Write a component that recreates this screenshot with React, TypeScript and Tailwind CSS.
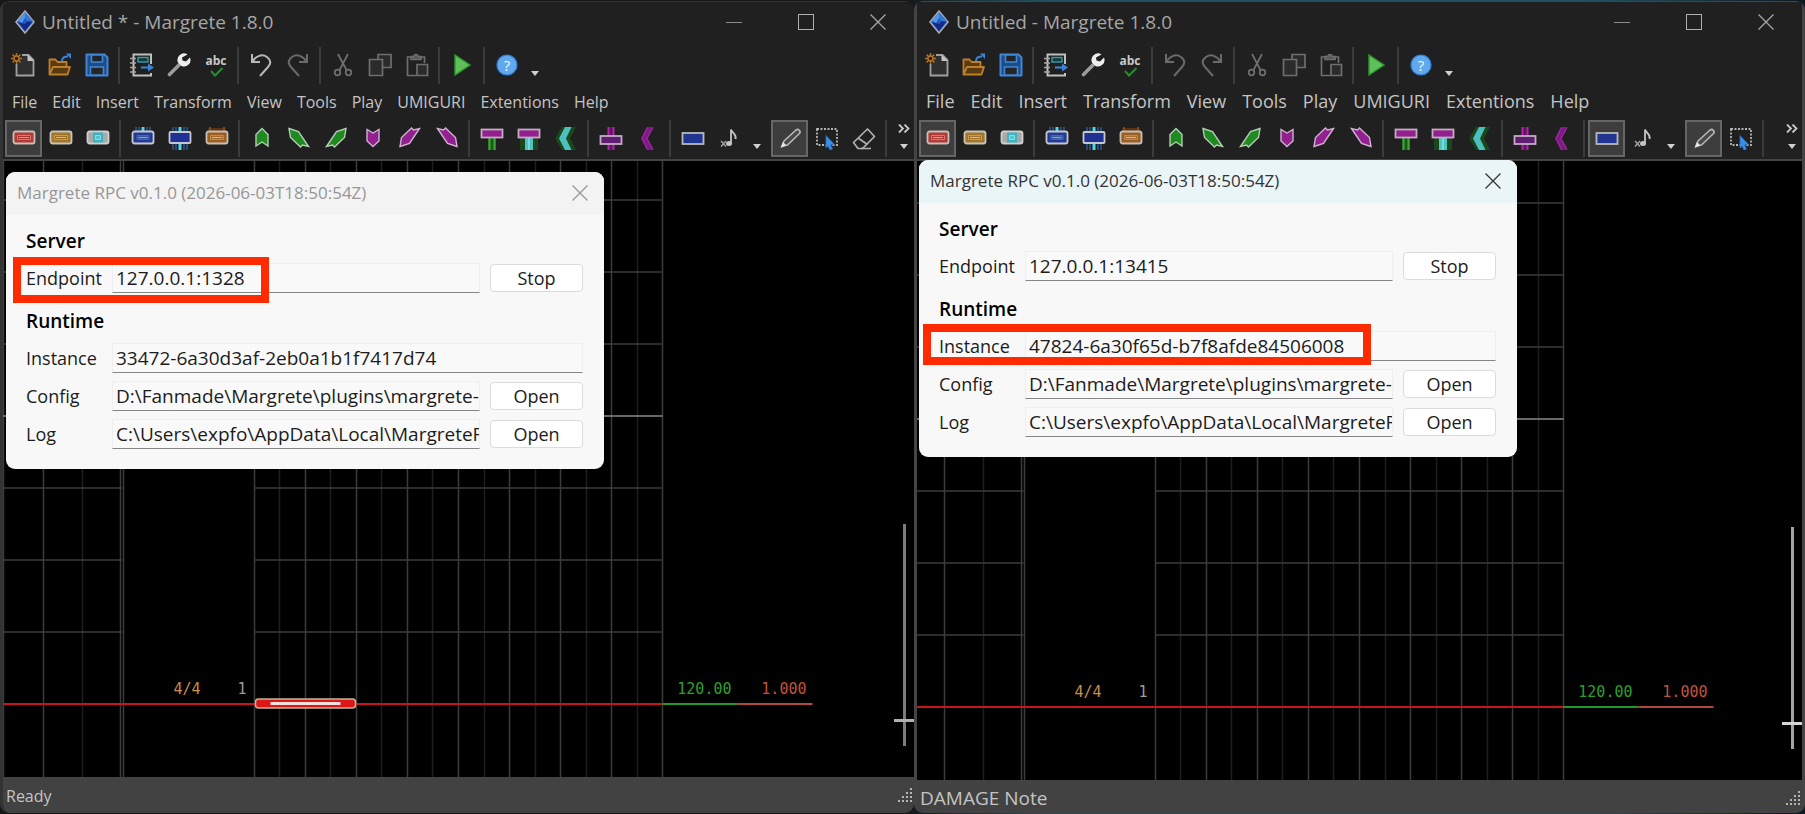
import { ReactNode } from "react";

type IconName =
  | "new" | "open" | "save" | "export" | "wrench" | "spell" | "undo" | "redo"
  | "cut" | "copy" | "paste" | "play" | "help"
  | "tap" | "extap" | "flick" | "hold" | "slide" | "air-hold"
  | "up" | "up-left" | "up-right" | "down" | "down-left" | "down-right"
  | "air-slide" | "air-crush" | "chevron-cyan" | "cross" | "chevron-purple"
  | "damage" | "note" | "pencil" | "select" | "eraser";

const diagonal = "M2 1.5L11.5 4.5 21.5 19.5 15.5 18 13.5 20 3.5 10.5Z";

const icons: Record<IconName, ReactNode> = {
  new: (
    <>
      <path d="M11 2h6.5L22.5 7v15.5h-17V11" fill="#2f2f2f" stroke="#a0a0a0" strokeWidth="1.8" />
      <path d="M16.5 1.5V8h6.5z" fill="#c4c4c4" />
      <circle cx="5.5" cy="5.5" r="2.6" fill="none" stroke="#b8741f" strokeWidth="1.6" />
      <path d="M5.5 0v2M5.5 9v2M0 5.5h2M9 5.5h2M1.6 1.6l1.3 1.3M8.1 8.1l1.3 1.3M1.6 9.4l1.3-1.3M8.1 2.9l1.3-1.3" stroke="#b8741f" strokeWidth="1.4" />
    </>
  ),
  open: (
    <>
      <path d="M1.5 21.5V6.5h6l2 2.5h9v4M1.5 21.5L5 14h17l-2.5 7.5z" fill="#5a3a10" stroke="#bd7f2c" strokeWidth="1.8" strokeLinejoin="round" />
      <path d="M14 8c0-3 2-4.5 6-4.5" fill="none" stroke="#3b83d6" strokeWidth="1.8" />
      <path d="M18 .5h5v5.5z" fill="#3b83d6" />
    </>
  ),
  save: (
    <>
      <path d="M1.5 1.5h18l3 3v18h-21z" fill="#1d4c86" stroke="#3f86d6" strokeWidth="2" strokeLinejoin="round" />
      <path d="M6.5 2h11v7h-11z" fill="#20252c" stroke="#3f86d6" strokeWidth="1.6" />
      <path d="M5.5 14h13v8h-13z" fill="#262626" stroke="#3f86d6" strokeWidth="1.6" />
    </>
  ),
  export: (
    <>
      <path d="M21 11V1.5H3.5v21H21V20" fill="none" stroke="#c0c0c0" strokeWidth="2" />
      <path d="M0 5.5h6M0 10h6M0 14.5h6M0 19h6" stroke="#a8a8a8" strokeWidth="1.4" />
      <rect x="8" y="4.5" width="10" height="4.5" fill="#15393d" stroke="#3d9ca3" strokeWidth="1.4" />
      <path d="M11 14.5h8" stroke="#3b83d6" strokeWidth="2.2" />
      <path d="M18 10.5l6 4-6 4z" fill="#3b83d6" />
    </>
  ),
  wrench: (
    <>
      <path d="M2.5 21.5L13 11" stroke="#9c9c9c" strokeWidth="3.6" strokeLinecap="round" />
      <path d="M20.5 1.5A6.5 6.5 0 0 0 11 9.5l3.5 3.5A6.5 6.5 0 0 0 23 4.5l-4 4-3.5-1-.5-3z" fill="#ededed" />
    </>
  ),
  spell: (
    <>
      <text x="12" y="12" textAnchor="middle" fontSize="12" fontWeight="700" fill="#c8c8c8" fontFamily="Open Sans, sans-serif">abc</text>
      <path d="M7 18l4 4.5 7.5-7.5" fill="none" stroke="#1d9428" strokeWidth="2" />
    </>
  ),
  undo: (
    <path d="M3 1v8h8M3.5 8.5C7 3 13 .5 18 4c5 4 3.5 7 1 10l-8 9" fill="none" stroke="currentColor" strokeWidth="2" />
  ),
  redo: (
    <path d="M21 1v8h-8M20.5 8.5C17 3 11 .5 6 4c-5 4-3.5 7-1 10l8 9" fill="none" stroke="currentColor" strokeWidth="2" />
  ),
  cut: (
    <g fill="none" stroke="#707070" strokeWidth="1.7">
      <path d="M7 1l8.5 16M17 1L8.5 17" />
      <circle cx="6.5" cy="19.5" r="2.8" />
      <circle cx="17.5" cy="19.5" r="2.8" />
    </g>
  ),
  copy: (
    <g fill="#2b2b2b" stroke="#6e6e6e" strokeWidth="1.7">
      <path d="M10 1.5h13v13H10z" />
      <path d="M1.5 6.5h13v16h-13z" />
    </g>
  ),
  paste: (
    <g fill="none" stroke="#6e6e6e" strokeWidth="1.7">
      <path d="M11 22.5H2.5V4H7M15 4h4.5v6" />
      <path d="M6 6.5h10V3.5h-3a2 2 0 0 0-4 0H6z" fill="#555" />
      <path d="M12 11.5h10.5v11H12z" fill="#2b2b2b" />
    </g>
  ),
  play: <path d="M5 2l15 10L5 22z" fill="#5fbf5a" stroke="#2c9a2c" strokeWidth="1.4" />,
  help: (
    <>
      <circle cx="12" cy="12" r="10" fill="#62a8ee" stroke="#2f7fd6" strokeWidth="1.2" />
      <text x="12" y="17.5" textAnchor="middle" fontSize="15" fill="#f2f8ff" fontFamily="Open Sans, sans-serif">?</text>
    </>
  ),
  tap: (
    <>
      <rect x="1.5" y="4.5" width="21" height="12" rx="2" fill="#b53a34" stroke="#c8c0bc" strokeWidth="1.8" />
      <path d="M5.5 8.5h13v4h-13z" fill="#a8322e" stroke="#cf7d76" strokeWidth="1" />
      <path d="M7 10.5h10" stroke="#dfa09a" strokeWidth="1.2" />
    </>
  ),
  extap: (
    <>
      <rect x="1.5" y="4.5" width="21" height="12" rx="2" fill="#a3772a" stroke="#c8c4bc" strokeWidth="1.8" />
      <path d="M5.5 8.5h13v4h-13z" fill="#9a6d22" stroke="#c69c56" strokeWidth="1" />
      <path d="M7 10.5h10" stroke="#d9bd88" strokeWidth="1.2" />
    </>
  ),
  flick: (
    <>
      <rect x="1.5" y="4.5" width="21" height="12" rx="2" fill="#a9a9a9" stroke="#d0d0d0" strokeWidth="1.8" />
      <path d="M7 5.5h10v10H7z" fill="#3cb4c0" />
      <path d="M9.5 8.5h5v4h-5z" fill="#58c4cf" stroke="#8cdce2" strokeWidth="1" />
    </>
  ),
  hold: (
    <>
      <path d="M5 0v5M8 0v5M16 0v5M19 0v5" stroke="#274a78" strokeWidth="2" />
      <path d="M12 0v5" stroke="#4fd8ea" strokeWidth="3" />
      <rect x="1.5" y="4.5" width="21" height="12" rx="2" fill="#223a96" stroke="#c6c8d0" strokeWidth="1.8" />
      <path d="M6 8.5h12v4H6z" fill="#35569c" stroke="#3f6ab0" strokeWidth="1" />
      <path d="M7.5 10.5h9" stroke="#7fa3d0" strokeWidth="1.2" />
    </>
  ),
  slide: (
    <>
      <path d="M5 0v23M8 0v23M16 0v23M19 0v23" stroke="#274a78" strokeWidth="2" />
      <path d="M12 0v23" stroke="#4fd8ea" strokeWidth="3" />
      <rect x="1.5" y="5" width="21" height="11" rx="1" fill="#203196" stroke="#c6c8d0" strokeWidth="1.8" />
    </>
  ),
  "air-hold": (
    <>
      <path d="M3.5 1h17v5h-17z" fill="#5a3210" />
      <path d="M5 0v5M19 0v5" stroke="#8a521c" strokeWidth="1.6" />
      <rect x="1.5" y="4.5" width="21" height="12" rx="2" fill="#9c5f22" stroke="#c8c0b8" strokeWidth="1.8" />
      <path d="M5.5 8.5h13v4h-13z" fill="#a56a30" stroke="#c08a50" strokeWidth="1" />
      <path d="M7 10.5h10" stroke="#dcb080" strokeWidth="1.2" />
    </>
  ),
  up: <path d="M12 1.5L18 7.5V19L12 15 6 19V7.5Z" fill="#1f8a1f" stroke="#b4ccb4" strokeWidth="1.4" />,
  "up-left": <path d={diagonal} fill="#1f8a1f" stroke="#b4ccb4" strokeWidth="1.4" />,
  "up-right": (
    <path d={diagonal} transform="matrix(-1 0 0 1 24 0)" fill="#1f8a1f" stroke="#b4ccb4" strokeWidth="1.4" />
  ),
  down: <path d="M12 19.5L18 14V2.5L12 6 6 2.5V14Z" fill="#92208f" stroke="#ccb4cc" strokeWidth="1.4" />,
  "down-left": (
    <path d={diagonal} transform="matrix(1 0 0 -1 0 21)" fill="#92208f" stroke="#ccb4cc" strokeWidth="1.4" />
  ),
  "down-right": (
    <path d={diagonal} transform="matrix(-1 0 0 -1 24 21)" fill="#92208f" stroke="#ccb4cc" strokeWidth="1.4" />
  ),
  "air-slide": (
    <>
      <path d="M8 11h8v12H8z" fill="#1b5a1b" />
      <path d="M9.5 11v12M14.5 11v12" stroke="#3da838" strokeWidth="2" />
      <rect x="1.5" y="2.5" width="21" height="8" fill="#92208f" stroke="#c4aac4" strokeWidth="1.8" />
    </>
  ),
  "air-crush": (
    <>
      <path d="M3 11h18v12H3z" fill="#1b471b" />
      <path d="M8 11h8v12H8z" fill="#4cc4c4" />
      <path d="M12 11v12" stroke="#a0e8e8" strokeWidth="1.2" />
      <rect x="1.5" y="2.5" width="21" height="8" fill="#92208f" stroke="#c4aac4" strokeWidth="1.8" />
    </>
  ),
  "chevron-cyan": (
    <>
      <path d="M8 0h14l-6 11.5L22 23H8L1 11.5z" fill="#1b471b" />
      <path d="M11 0h6.5l-5.5 11.5L17.5 23H11L5 11.5z" fill="#4cbfbf" />
    </>
  ),
  cross: (
    <>
      <path d="M8.5 0h7v23h-7z" fill="#5d1560" />
      <path d="M9.5 0v23M14.5 0v23" stroke="#b324b0" strokeWidth="1.8" />
      <rect x="1.5" y="9" width="21" height="8" fill="#5e1e72" stroke="#c4aac4" strokeWidth="1.8" />
    </>
  ),
  "chevron-purple": (
    <>
      <path d="M11 0h6.5l-6 11.5L17.5 23H11L5 11.5z" fill="#7a1c80" />
      <path d="M11.5 .5L6 11.5l5.5 11M17 .5l-6 11 6 11" fill="none" stroke="#a0249e" strokeWidth="1.3" />
    </>
  ),
  damage: <rect x="1.5" y="6" width="21" height="11" fill="#203590" stroke="#b8b8b8" strokeWidth="1.8" />,
  note: (
    <>
      <path d="M13 17V2.5c1 3.5 6 4.5 4.5 9.5" fill="none" stroke="#c4c4c4" strokeWidth="1.8" />
      <ellipse cx="11" cy="16.5" rx="3" ry="2.5" fill="#c4c4c4" />
      <path d="M3 14l5 5.5M8 14l-5 5.5" stroke="#a0a0a0" strokeWidth="1.5" />
    </>
  ),
  pencil: (
    <>
      <path d="M4 19l2-5L18 3a2.5 2.5 0 0 1 3.5 3.5L9.5 18z" fill="#4a4a4a" stroke="#b8b8b8" strokeWidth="1.6" strokeLinejoin="round" />
      <path d="M2.5 21l2.5-6 3.5 3.5z" fill="#e4e4e4" />
    </>
  ),
  select: (
    <>
      <rect x="2" y="2" width="20" height="16" fill="none" stroke="#b4b4b4" strokeWidth="1.8" strokeDasharray="2 1.5" />
      <path d="M11 8.5l8 8.5-3.5 1 2 4-2.5 1-2-4-2 2z" fill="#3b8ee6" stroke="#2a6fc0" strokeWidth="0.8" />
    </>
  ),
  eraser: (
    <g fill="none" stroke="#b0b0b0" strokeWidth="1.7" strokeLinejoin="round">
      <path d="M1.5 15.5L15.5 2l7 7.5L10.5 21.5H6z" />
      <path d="M6 11l9.5 6.5M9 21.5h10" />
    </g>
  ),
};

function Icon({ name }: { name: IconName }) {
  return (
    <svg viewBox="0 0 24 24" className="size-6" aria-hidden="true">
      {icons[name]}
    </svg>
  );
}

function ToolButton({ name, active, dim }: { name: IconName; active?: boolean; dim?: boolean }) {
  return (
    <button
      type="button"
      aria-label={name}
      className={`flex h-[37px] w-[37px] shrink-0 items-center justify-center border-2 ${
        active ? "border-[#666] bg-[#3d3d3d]" : "border-transparent"
      } ${dim ? "text-[#6a6a6a]" : "text-[#b8b8b8]"}`}
    >
      <Icon name={name} />
    </button>
  );
}

function Separator() {
  return (
    <div className="flex h-[37px] w-2 shrink-0 justify-center">
      <div className="w-0.5 bg-[#393c3c]" />
    </div>
  );
}

function Caret() {
  return (
    <svg viewBox="0 0 10 6" className="h-1.5 w-2.5" aria-hidden="true">
      <path d="M1 0h8L5 5z" fill="#d0d0d0" />
    </svg>
  );
}

function CloseGlyph({ className }: { className: string }) {
  return (
    <svg viewBox="0 0 16 16" className={className} aria-hidden="true">
      <path d="M.5 .5l15 15M15.5 .5l-15 15" stroke="currentColor" strokeWidth="1.3" fill="none" />
    </svg>
  );
}

function TitleBar({ title }: { title: string }) {
  return (
    <header className="flex h-10 items-center bg-[#202020] pl-3 text-[#a6a6a6]">
      <svg viewBox="0 0 20 24" className="h-6 w-5" aria-hidden="true">
        <path d="M10 1l9 11-9 11L1 12z" fill="#2458c0" stroke="#a9adb4" strokeWidth="1.5" />
        <path d="M10 2.5l-7 8.5 4 2 3-5z" fill="#4f9ae4" />
        <path d="M10 8l3 4 5-1-8-8.5z" fill="#3877d4" />
        <path d="M3 12l7 2 3-3 4 1-7 9z" fill="#152a86" />
      </svg>
      <h1 className="ml-[7px] text-[19px] leading-6">{title}</h1>
      <div className="ml-auto flex h-full">
        <button type="button" aria-label="Minimize" className="flex w-[72px] items-center justify-center">
          <span className="h-px w-4 bg-[#8a8a8a]" />
        </button>
        <button type="button" aria-label="Maximize" className="flex w-[72px] items-center justify-center">
          <span className="size-4 border border-[#b0b0b0]" />
        </button>
        <button type="button" aria-label="Close" className="flex w-[72px] items-center justify-center">
          <CloseGlyph className="size-4" />
        </button>
      </div>
    </header>
  );
}

const menus = ["File", "Edit", "Insert", "Transform", "View", "Tools", "Play", "UMIGURI", "Extentions", "Help"];

function MainToolbar({ dirty }: { dirty: boolean }) {
  return (
    <div className="flex h-[46px] items-center bg-[#202020] pl-px">
      <ToolButton name="new" />
      <ToolButton name="open" />
      <ToolButton name="save" />
      <Separator />
      <ToolButton name="export" />
      <ToolButton name="wrench" />
      <ToolButton name="spell" />
      <Separator />
      <ToolButton name="undo" dim={!dirty} />
      <ToolButton name="redo" dim />
      <Separator />
      <ToolButton name="cut" />
      <ToolButton name="copy" />
      <ToolButton name="paste" />
      <Separator />
      <ToolButton name="play" />
      <Separator />
      <ToolButton name="help" />
      <button type="button" aria-label="More help" className="flex h-6 w-5 items-end justify-center">
        <Caret />
      </button>
    </div>
  );
}

function NoteToolbar({ selected, eraser }: { selected: IconName[]; eraser: boolean }) {
  const groups: IconName[][] = [
    ["tap", "extap", "flick"],
    ["hold", "slide", "air-hold"],
    ["up", "up-left", "up-right", "down", "down-left", "down-right"],
    ["air-slide", "air-crush", "chevron-cyan"],
    ["cross", "chevron-purple"],
  ];

  return (
    <div className="flex h-[43px] items-start bg-[#202020] pt-1 pl-0.5">
      {groups.map((group, i) => (
        <div key={i} className="flex">
          {group.map((name) => (
            <ToolButton key={name} name={name} active={selected.includes(name)} />
          ))}
          <Separator />
        </div>
      ))}
      <ToolButton name="damage" active={selected.includes("damage")} />
      <ToolButton name="note" />
      <button type="button" aria-label="Note options" className="flex h-[30px] w-[23px] items-end pl-1">
        <Caret />
      </button>
      <ToolButton name="pencil" active />
      <ToolButton name="select" />
      {eraser && <ToolButton name="eraser" />}
      <Separator />
      <button
        type="button"
        aria-label="More tools"
        className="mr-1 ml-auto flex h-[30px] w-3 shrink-0 flex-col items-center justify-between pt-1"
      >
        <svg viewBox="0 0 12 9" className="h-[9px] w-3" aria-hidden="true">
          <path d="M1 .5l4 4-4 4M6.5 .5l4 4-4 4" fill="none" stroke="#c8c8c8" strokeWidth="1.8" />
        </svg>
        <Caret />
      </button>
    </div>
  );
}

const beats = [1, 2, 3, 4, 5, 6, 7, 8];
const lanes = [-4, -3, -2, -1, 0, 1, 2, 3, 4];
const halfLanes = [-179, -128, -77, -26, 26, 77, 128, 179];

// Origin is the bottom centre of the chart, so the grid stays centred when the window resizes.
function Chart({ withNote }: { withNote: boolean }) {
  return (
    <svg className="absolute inset-0 h-full w-full" aria-label="Chart">
      <svg x="50%" y="100%" overflow="visible">
        <g stroke="#1f1f1f" strokeWidth="1.5">
          <path d="M-376 0V-700" />
          {halfLanes.map((x) => (
            <path key={x} d={`M${x} 0V-700`} />
          ))}
        </g>
        <g stroke="#3c3c3c" strokeWidth="1.5">
          <path d="M-455 0V-700M-415 0V-700M-338 0V-700M-335 0V-700" />
          {lanes.map((i) => (
            <path key={i} d={`M${i * 51} 0V-700`} />
          ))}
          {beats.map((i) => (
            <path
              key={i}
              stroke={i === 4 ? "#8a8a8a" : "#3c3c3c"}
              d={`M-900 ${-73 - i * 72}H-336M-204 ${-73 - i * 72}H204`}
            />
          ))}
        </g>
        <g strokeWidth="2">
          <path d="M-900 -73H204" stroke="#c4161c" />
          <path d="M204 -73H279" stroke="#1f9a26" />
          <path d="M279 -73H354" stroke="#b0493a" />
        </g>
        <g fontSize="15" fontFamily="'DejaVu Sans Mono', monospace">
          <text x="-285" y="-83" fill="#c98f45">4/4</text>
          <text x="-221" y="-83" fill="#9a9a9a">1</text>
          <text x="273" y="-83" textAnchor="end" fill="#2aa02a">120.00</text>
          <text x="348" y="-83" textAnchor="end" fill="#c4503f">1.000</text>
        </g>
        {withNote && (
          <>
            <rect x="-203" y="-78" width="100" height="9" rx="3" fill="#dc1717" stroke="#c8b49c" strokeWidth="1.5" />
            <path d="M-188 -73.5H-118" stroke="#f6dede" strokeWidth="3" />
          </>
        )}
      </svg>
    </svg>
  );
}

function Grip() {
  const dots = [0, 1, 2, 3].flatMap((row) => Array.from({ length: row + 1 }, (_, i) => [12 - i * 4, row * 4]));
  return (
    <svg viewBox="0 0 16 16" className="size-4" aria-hidden="true">
      {dots.map(([x, y]) => (
        <rect key={`${x}-${y}`} x={x} y={y} width="2" height="2" fill="#b4b4b4" />
      ))}
    </svg>
  );
}

function Field({ id, label, value, action }: { id: string; label: string; value: string; action?: string }) {
  return (
    <div className="flex h-[30px] items-center">
      <label htmlFor={id} className="w-[86px] shrink-0">
        {label}
      </label>
      <input
        id={id}
        type="text"
        readOnly
        value={value}
        className="h-full min-w-0 flex-1 border border-[#efefef] border-b-[#858585] bg-[#f9f9f9] pl-[3px] text-[19px] outline-none"
      />
      {action && (
        <button
          type="button"
          className="ml-2.5 h-7 w-[93px] shrink-0 rounded-sm border border-[#dcdcdc] bg-white leading-6"
        >
          {action}
        </button>
      )}
    </div>
  );
}

type RpcInfo = {
  id: string;
  endpoint: string;
  instance: string;
};

function RpcDialog({ info, focused, children }: { info: RpcInfo; focused?: boolean; children: ReactNode }) {
  return (
    <section className="relative w-[598px] overflow-hidden rounded-[9px] bg-[#f8f8f8] pb-5 text-[18px] text-[#1c1c1c]">
      <header
        className={`flex h-[43px] items-center justify-between pr-4 pb-0.5 pl-[11px] text-[17px] ${
          focused ? "bg-[#eaf5f7] text-[#333]" : "bg-[#f3f3f3] text-[#979797]"
        }`}
      >
        <h2>Margrete RPC v0.1.0 (2026-06-03T18:50:54Z)</h2>
        <button type="button" aria-label="Close dialog">
          <CloseGlyph className="size-4" />
        </button>
      </header>
      <div className="pr-[21px] pl-5">
        <h3 className="mt-2.5 flex h-8 items-center text-[19px] font-semibold text-black">Server</h3>
        <div className="mt-1.5">
          <Field id={`${info.id}-endpoint`} label="Endpoint" value={info.endpoint} action="Stop" />
        </div>
        <h3 className="mt-3 flex h-8 items-center text-[19px] font-semibold text-black">Runtime</h3>
        <div className="mt-1.5 flex flex-col gap-2">
          <Field id={`${info.id}-instance`} label="Instance" value={info.instance} />
          <Field
            id={`${info.id}-config`}
            label="Config"
            value="D:\Fanmade\Margrete\plugins\margrete-rpc"
            action="Open"
          />
          <Field
            id={`${info.id}-log`}
            label="Log"
            value="C:\Users\expfo\AppData\Local\MargreteRPC"
            action="Open"
          />
        </div>
      </div>
      {children}
    </section>
  );
}

function ZoomSlider({ className }: { className: string }) {
  return (
    <input
      type="range"
      min={0}
      max={100}
      defaultValue={11}
      aria-label="Zoom"
      className={`absolute right-0 bottom-[31px] h-[222px] w-5 appearance-none bg-[length:3px_100%] bg-center bg-no-repeat [direction:rtl] [writing-mode:vertical-lr] [&::-webkit-slider-thumb]:h-[3px] [&::-webkit-slider-thumb]:w-5 [&::-webkit-slider-thumb]:appearance-none ${className}`}
    />
  );
}

export default function App() {
  return (
    <main className="grid min-h-screen grid-cols-[914fr_891fr] bg-[linear-gradient(90deg,#151718_50%,#1f5060_58%,#1f5060_88%,#0c1a22)] py-px font-['Open_Sans','Noto_Sans',sans-serif]">
      <div className="flex min-w-0 flex-col overflow-hidden rounded-[9px] border-t border-l-3 border-[#333] bg-black">
        <TitleBar title="Untitled * - Margrete 1.8.0" />
        <MainToolbar dirty />
        <nav className="flex h-7 items-center gap-[15px] bg-[#202020] pl-[9px] text-[16px] text-[#c4c4c4]">
          {menus.map((m) => (
            <button key={m} type="button">
              {m}
            </button>
          ))}
        </nav>
        <NoteToolbar selected={["tap"]} eraser />
        <div className="relative min-h-[616px] flex-1 border-t-2 border-[#444] bg-black">
          <Chart withNote />
          <ZoomSlider className="bg-[linear-gradient(#7c7c7c,#7c7c7c)] [&::-webkit-slider-thumb]:bg-[#b0b0b0]" />
          <div className="absolute top-[11px] left-[3px]">
            <RpcDialog
              info={{ id: "a", endpoint: "127.0.0.1:1328", instance: "33472-6a30d3af-2eb0a1b1f7417d74" }}
            >
              <div className="pointer-events-none absolute top-[85px] left-[7px] h-[46px] w-[256px] border-8 border-[#ff2a00]" />
            </RpcDialog>
          </div>
        </div>
        <footer className="flex h-9 items-center justify-between bg-[#424242] pt-0.5 pl-[3px] text-[16px] text-[#c4c4c4]">
          <span>Ready</span>
          <Grip />
        </footer>
      </div>

      <div className="flex min-w-0 flex-col rounded-[9px] border-x-3 border-t border-[#444] bg-black">
        <TitleBar title="Untitled - Margrete 1.8.0" />
        <MainToolbar dirty={false} />
        <nav className="flex h-7 items-center gap-4 bg-[#202020] pb-0.5 pl-[9px] text-[18px] text-[#c4c4c4]">
          {menus.map((m) => (
            <button key={m} type="button">
              {m}
            </button>
          ))}
        </nav>
        <NoteToolbar selected={["tap", "damage"]} eraser={false} />
        <div className="relative min-h-[616px] flex-1 border-t-2 border-[#444] bg-black">
          <Chart withNote={false} />
          <ZoomSlider className="bg-[linear-gradient(#a4a4a4,#a4a4a4)] [&::-webkit-slider-thumb]:bg-[#d4d4d4]" />
          <div className="absolute -top-px left-0.5">
            <RpcDialog
              focused
              info={{ id: "b", endpoint: "127.0.0.1:13415", instance: "47824-6a30f65d-b7f8afde84506008" }}
            >
              <div className="pointer-events-none absolute top-[164px] left-[4px] h-[41px] w-[448px] border-8 border-[#ff2a00]" />
            </RpcDialog>
          </div>
        </div>
        <footer className="flex h-[33px] items-center justify-between rounded-b-[6px] bg-[#424242] pt-1 pl-[3px] text-[19px] text-[#c4c4c4]">
          <span>DAMAGE Note</span>
          <Grip />
        </footer>
      </div>
    </main>
  );
}
